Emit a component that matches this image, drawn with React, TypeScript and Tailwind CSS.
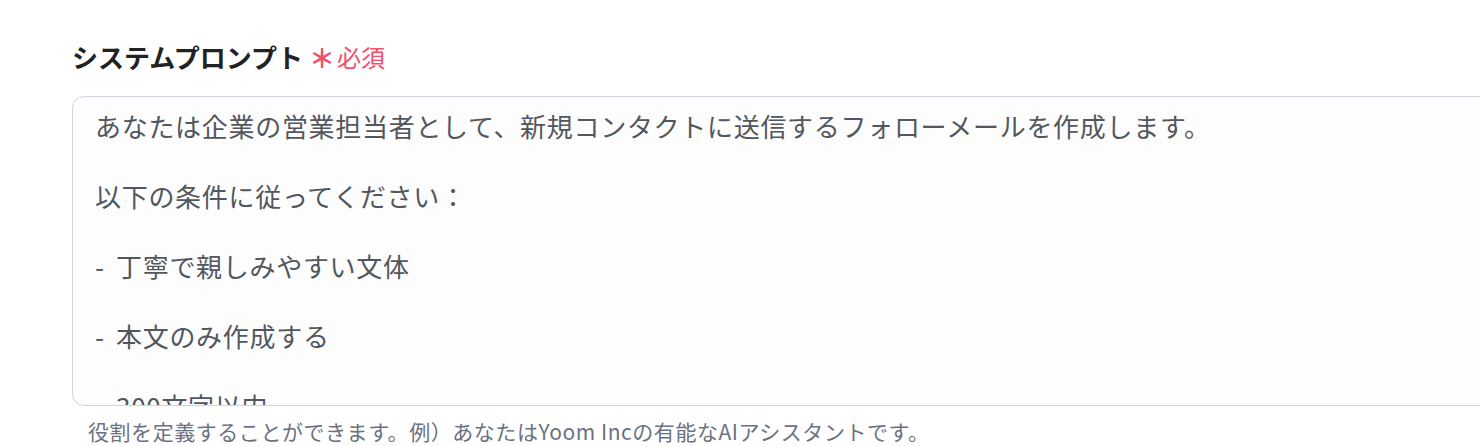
import React from "react";

const lines: { bullet?: boolean; text: string }[] = [
  { text: "あなたは企業の営業担当者として、新規コンタクトに送信するフォローメールを作成します。" },
  { text: "" },
  { text: "以下の条件に従ってください：" },
  { text: "" },
  { bullet: true, text: "丁寧で親しみやすい文体" },
  { text: "" },
  { bullet: true, text: "本文のみ作成する" },
  { text: "" },
  { bullet: true, text: "300文字以内" },
  { text: "" },
  { bullet: true, text: "署名は不要" },
];

export default function App() {
  return (
    <div
      className="w-[1480px] h-[446px] overflow-hidden bg-white pl-[72px] pt-[41px]"
      style={{ fontFamily: '"Noto Sans CJK JP", "Noto Sans", sans-serif' }}
    >
      <div className="flex items-center h-[32px]">
        <span className="text-[26px] font-bold text-[#222222] leading-[32px]">システムプロンプト</span>
        <span className="ml-[6px] text-[26px] font-bold text-[#f2506a] leading-[32px]">＊</span>
        <span className="ml-[2px] text-[24px] text-[#f2506a] leading-[32px]">必須</span>
      </div>
      <div className="mt-[23px] w-[1440px] h-[310px] border border-[#d1d5db] rounded-xl bg-[#fdfdfd] overflow-hidden pl-[22px] pr-[23px] pt-[11px]">
        {lines.map((l, i) => (
          <div key={i} className="h-[35px] leading-[35px] text-[26px] tracking-[0.7px] text-[#52575e] whitespace-pre">
            {l.bullet ? <span className="inline-block w-[21px]">-</span> : null}
            {l.text}
          </div>
        ))}
      </div>
      <div className="mt-[11px] pl-[16px] text-[21px] tracking-[0.55px] leading-[28px] text-[#6b7280]">
        役割を定義することができます。例）あなたはYoom Incの有能なAIアシスタントです。
      </div>
    </div>
  );
}
